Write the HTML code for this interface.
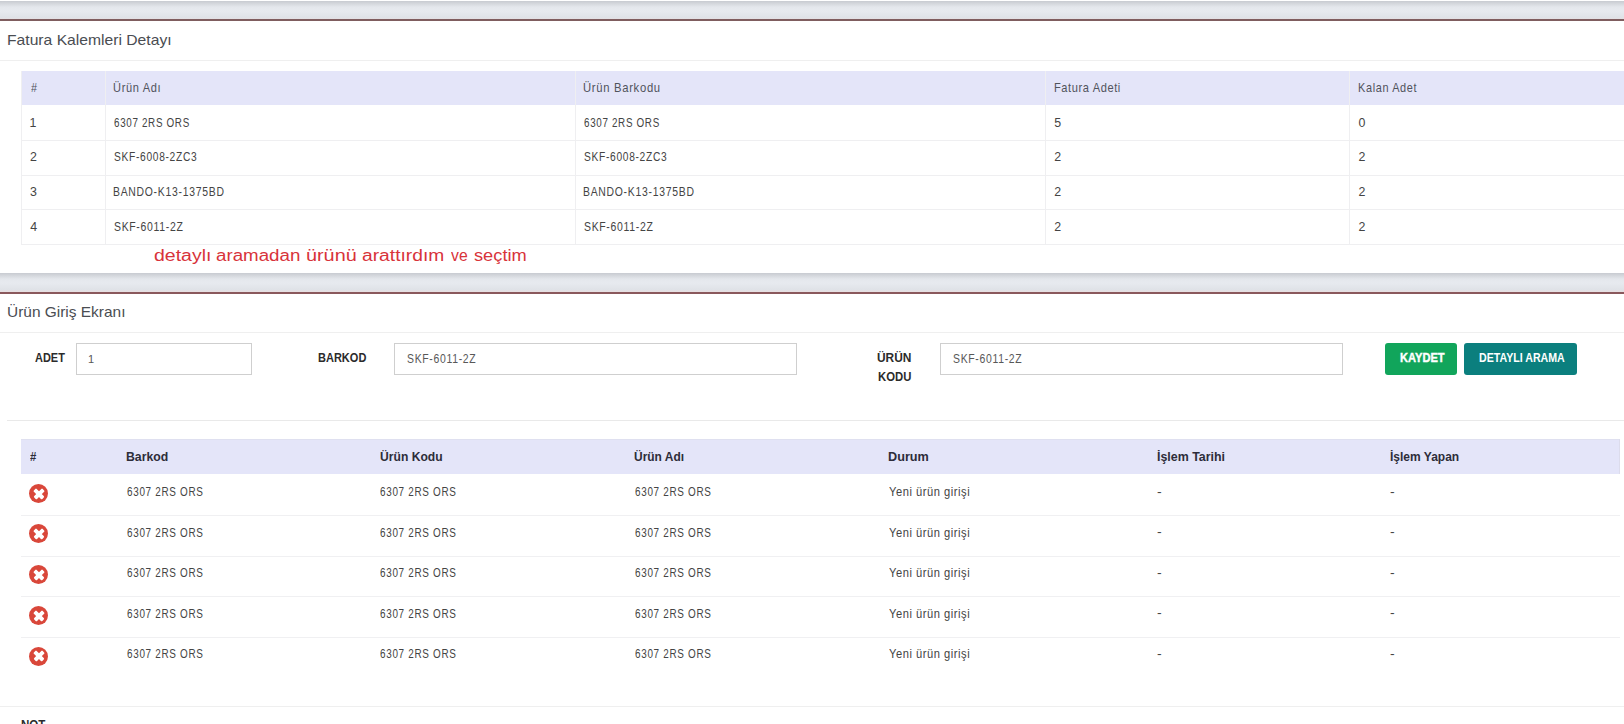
<!DOCTYPE html>
<html lang="tr"><head><meta charset="utf-8"><title>Fatura Kalemleri / Ürün Giriş</title>
<style>
html,body{margin:0;padding:0}
body{width:1624px;height:724px;overflow:hidden;position:relative;background:#e6e9ed;font-family:"Liberation Sans", sans-serif}
.t{position:absolute;white-space:nowrap;line-height:1;transform-origin:0 0}
.abs{position:absolute}
.card{position:absolute;left:0;width:1624px;background:#fff;border-top:2px solid #835c5e;box-sizing:border-box}
.card-header{position:absolute;left:0;top:0;width:1624px;box-sizing:border-box;border-bottom:1px solid #efefef}
.gap{position:absolute;left:0;width:1624px;height:19px;background:linear-gradient(#c8cbd1 0px,#e4e7ec 6px,#e7eaef 10px,#dfe2e7 17px,#e6dfe2 18px)}
.hl{position:absolute;height:1px}
.vl{position:absolute;width:1px}
.tbl{position:absolute}
.thead{position:absolute;left:0;top:0;background:#e4e5f9}
.inp{position:absolute;border:1px solid #cfcfcf;background:#fff;box-sizing:border-box;height:32px}
.btn{position:absolute;height:32px;border-radius:3px;box-sizing:border-box}
.xi{position:absolute;width:19px;height:19px;border-radius:50%;background:#d9473a}
.xi:before,.xi:after{content:"";position:absolute;left:3.5px;top:7.75px;width:12px;height:3.5px;background:#fff;border-radius:1px;transform:rotate(45deg)}
.xi:after{transform:rotate(-45deg)}
</style></head><body>
<div class="abs" style="left:0;top:0;width:1624px;height:1px;background:#fff"></div>
<div class="gap" style="top:1px"></div>

<div class="card" style="top:19px;height:254px;border-top-color:#7f5d5f">
<div class="card-header" style="height:40px">
<span class="t" style="left:6.75px;top:11.00px;font-size:15.217px;color:#4a4d52;transform:scaleX(1.0305)">Fatura Kalemleri Detayı</span>
</div>
<div class="tbl" style="left:21px;top:50px;width:1603px;height:175px">
<div class="thead" style="width:1603px;height:34px"></div>
<div class="hl" style="left:0;top:69px;width:1603px;background:#efeff1"></div>
<div class="hl" style="left:0;top:104px;width:1603px;background:#efeff1"></div>
<div class="hl" style="left:0;top:138px;width:1603px;background:#efeff1"></div>
<div class="hl" style="left:0;top:173px;width:1603px;background:#efeff1"></div>
<div class="vl" style="left:0px;top:0;height:174px;background:#efeff1"></div>
<div class="vl" style="left:84px;top:0;height:174px;background:#efeff1"></div>
<div class="vl" style="left:554px;top:0;height:174px;background:#efeff1"></div>
<div class="vl" style="left:1024px;top:0;height:174px;background:#efeff1"></div>
<div class="vl" style="left:1328px;top:0;height:174px;background:#efeff1"></div>
<span class="t" style="left:9.50px;top:11.20px;font-size:12.464px;color:#50535c;transform:scaleX(0.8674)">#</span>
<span class="t" style="left:92.37px;top:11.20px;font-size:12.464px;color:#50535c;letter-spacing:0.748px;transform:scaleX(0.8867)">Ürün Adı</span>
<span class="t" style="left:562.45px;top:11.20px;font-size:12.464px;color:#50535c;letter-spacing:0.759px;transform:scaleX(0.9055)">Ürün Barkodu</span>
<span class="t" style="left:1032.91px;top:11.20px;font-size:12.464px;color:#50535c;letter-spacing:0.667px;transform:scaleX(0.8897)">Fatura Adeti</span>
<span class="t" style="left:1337.13px;top:11.20px;font-size:12.464px;color:#50535c;letter-spacing:0.740px;transform:scaleX(0.8753)">Kalan Adet</span>
<span class="t" style="left:8.57px;top:45.90px;font-size:12.394px;color:#444444">1</span>
<span class="t" style="left:92.71px;top:45.90px;font-size:12.754px;color:#444444;letter-spacing:0.876px;transform:scaleX(0.7710)">6307 2RS ORS</span>
<span class="t" style="left:562.81px;top:45.90px;font-size:12.754px;color:#444444;letter-spacing:0.876px;transform:scaleX(0.7710)">6307 2RS ORS</span>
<span class="t" style="left:1033.30px;top:45.90px;font-size:12.394px;color:#444444">5</span>
<span class="t" style="left:1337.57px;top:45.90px;font-size:12.394px;color:#444444">0</span>
<span class="t" style="left:8.88px;top:80.30px;font-size:12.394px;color:#444444">2</span>
<span class="t" style="left:92.74px;top:80.30px;font-size:12.754px;color:#444444;letter-spacing:0.850px;transform:scaleX(0.8023)">SKF-6008-2ZC3</span>
<span class="t" style="left:562.84px;top:80.30px;font-size:12.754px;color:#444444;letter-spacing:0.850px;transform:scaleX(0.8023)">SKF-6008-2ZC3</span>
<span class="t" style="left:1033.18px;top:80.30px;font-size:12.394px;color:#444444">2</span>
<span class="t" style="left:1337.38px;top:80.30px;font-size:12.394px;color:#444444">2</span>
<span class="t" style="left:9.07px;top:115.00px;font-size:12.394px;color:#444444">3</span>
<span class="t" style="left:92.37px;top:115.00px;font-size:12.754px;color:#444444;letter-spacing:0.896px;transform:scaleX(0.8152)">BANDO-K13-1375BD</span>
<span class="t" style="left:562.47px;top:115.00px;font-size:12.754px;color:#444444;letter-spacing:0.896px;transform:scaleX(0.8152)">BANDO-K13-1375BD</span>
<span class="t" style="left:1033.18px;top:115.00px;font-size:12.394px;color:#444444">2</span>
<span class="t" style="left:1337.38px;top:115.00px;font-size:12.394px;color:#444444">2</span>
<span class="t" style="left:9.25px;top:149.80px;font-size:12.394px;color:#444444">4</span>
<span class="t" style="left:92.73px;top:149.80px;font-size:12.754px;color:#444444;letter-spacing:0.829px;transform:scaleX(0.8199)">SKF-6011-2Z</span>
<span class="t" style="left:562.83px;top:149.80px;font-size:12.754px;color:#444444;letter-spacing:0.829px;transform:scaleX(0.8199)">SKF-6011-2Z</span>
<span class="t" style="left:1033.18px;top:149.80px;font-size:12.394px;color:#444444">2</span>
<span class="t" style="left:1337.38px;top:149.80px;font-size:12.394px;color:#444444">2</span>
</div>
<div class="abs" style="left:0;top:0;width:1624px;height:252px">
<span class="t" style="left:154.12px;top:225.90px;font-size:17.222px;color:#d8333a;transform:scaleX(1.1310)">detaylı</span>
<span class="t" style="left:216.35px;top:225.90px;font-size:17.222px;color:#d8333a;transform:scaleX(1.0883)">aramadan</span>
<span class="t" style="left:305.71px;top:225.90px;font-size:17.222px;color:#d8333a;transform:scaleX(1.1510)">ürünü</span>
<span class="t" style="left:362.23px;top:225.90px;font-size:17.222px;color:#d8333a;transform:scaleX(1.1166)">arattırdım</span>
<span class="t" style="left:450.70px;top:225.90px;font-size:17.222px;color:#d8333a;transform:scaleX(0.9153)">ve</span>
<span class="t" style="left:474.24px;top:225.90px;font-size:17.222px;color:#d8333a;transform:scaleX(1.0592)">seçtim</span>
</div>
</div>

<div class="gap" style="top:273px"></div>

<div class="card" style="top:292px;height:432px;border-top-color:#8a585c">
<div class="card-header" style="height:39px">
<span class="t" style="left:6.84px;top:10.60px;font-size:14.928px;color:#4a4d52;transform:scaleX(1.0360)">Ürün Giriş Ekranı</span>
</div>
<div class="abs" style="left:0;top:0;width:1624px;height:100px">
<span class="t" style="left:35.08px;top:57.90px;font-size:12.174px;color:#2b2b2b;font-weight:bold;transform:scaleX(0.9018)">ADET</span>
<span class="t" style="left:317.58px;top:57.80px;font-size:12.174px;color:#2b2b2b;font-weight:bold;transform:scaleX(0.9064)">BARKOD</span>
<span class="t" style="left:877.28px;top:57.50px;font-size:12.174px;color:#2b2b2b;font-weight:bold;transform:scaleX(0.9816)">ÜRÜN</span>
<span class="t" style="left:878.06px;top:76.60px;font-size:12.174px;color:#2b2b2b;font-weight:bold;transform:scaleX(0.9314)">KODU</span>
<div class="inp" style="left:76px;top:49px;width:176px"><span class="t" style="left:10.98px;top:9.80px;font-size:10.986px;color:#585858">1</span></div>
<div class="inp" style="left:394px;top:49px;width:403px"><span class="t" style="left:11.73px;top:9.10px;font-size:12.464px;color:#585858;letter-spacing:0.810px;transform:scaleX(0.8390)">SKF-6011-2Z</span></div>
<div class="inp" style="left:940px;top:49px;width:403px"><span class="t" style="left:11.63px;top:9.10px;font-size:12.464px;color:#585858;letter-spacing:0.810px;transform:scaleX(0.8390)">SKF-6011-2Z</span></div>
<div class="btn" style="left:1385px;top:49px;width:72px;background:#11a55b"><span class="t" style="left:14.98px;top:8.90px;font-size:12.464px;color:#ffffff;font-weight:bold;-webkit-text-stroke:0.4px #fff;transform:scaleX(0.8900)">KAYDET</span></div>
<div class="btn" style="left:1464px;top:49px;width:113px;background:#0b7f7e"><span class="t" style="left:14.81px;top:8.90px;font-size:12.464px;color:#ffffff;font-weight:bold;transform:scaleX(0.8529)">DETAYLI ARAMA</span></div>
</div>
<div class="hl" style="left:7px;top:126px;width:1617px;background:#e9e9e9"></div>
<div class="tbl" style="left:21px;top:145px;width:1599px;height:240px">
<div class="thead" style="width:1599px;height:35px;box-shadow:inset -1px 0 0 #dcdcec, inset 0 1px 0 #dfe0f0"></div>
<div class="hl" style="left:0;top:76px;width:1599px;background:#f0f0f2"></div>
<div class="hl" style="left:0;top:117px;width:1599px;background:#f0f0f2"></div>
<div class="hl" style="left:0;top:157px;width:1599px;background:#f0f0f2"></div>
<div class="hl" style="left:0;top:198px;width:1599px;background:#f0f0f2"></div>
<div class="xi" style="left:8.4px;top:45.3px"></div>
<div class="xi" style="left:8.4px;top:85.1px"></div>
<div class="xi" style="left:8.4px;top:126.0px"></div>
<div class="xi" style="left:8.4px;top:166.8px"></div>
<div class="xi" style="left:8.4px;top:207.6px"></div>
<span class="t" style="left:8.93px;top:12.00px;font-size:12.319px;color:#2d2d3a;font-weight:bold;transform:scaleX(0.9190)">#</span>
<span class="t" style="left:104.70px;top:12.00px;font-size:12.319px;color:#2d2d3a;font-weight:bold;transform:scaleX(0.9968)">Barkod</span>
<span class="t" style="left:358.67px;top:12.00px;font-size:12.319px;color:#2d2d3a;font-weight:bold;transform:scaleX(0.9858)">Ürün Kodu</span>
<span class="t" style="left:613.18px;top:12.00px;font-size:12.319px;color:#2d2d3a;font-weight:bold;transform:scaleX(0.9716)">Ürün Adı</span>
<span class="t" style="left:866.98px;top:12.00px;font-size:12.319px;color:#2d2d3a;font-weight:bold;transform:scaleX(1.0298)">Durum</span>
<span class="t" style="left:1135.69px;top:12.00px;font-size:12.319px;color:#2d2d3a;font-weight:bold;transform:scaleX(1.0089)">İşlem Tarihi</span>
<span class="t" style="left:1368.52px;top:12.00px;font-size:12.319px;color:#2d2d3a;font-weight:bold;transform:scaleX(0.9761)">İşlem Yapan</span>
<span class="t" style="left:105.50px;top:47.00px;font-size:12.609px;color:#444444;letter-spacing:0.866px;transform:scaleX(0.7872)">6307 2RS ORS</span>
<span class="t" style="left:359.40px;top:47.00px;font-size:12.609px;color:#444444;letter-spacing:0.866px;transform:scaleX(0.7872)">6307 2RS ORS</span>
<span class="t" style="left:613.90px;top:47.00px;font-size:12.609px;color:#444444;letter-spacing:0.866px;transform:scaleX(0.7872)">6307 2RS ORS</span>
<span class="t" style="left:867.58px;top:47.00px;font-size:12.609px;color:#444444;letter-spacing:0.601px;transform:scaleX(0.8851)">Yeni ürün girişi</span>
<span class="t" style="left:1135.74px;top:45.50px;font-size:13.000px;color:#444444;transform:scaleX(1.0769)">-</span>
<span class="t" style="left:1368.74px;top:45.50px;font-size:13.000px;color:#444444;transform:scaleX(1.0769)">-</span>
<span class="t" style="left:105.50px;top:87.60px;font-size:12.609px;color:#444444;letter-spacing:0.866px;transform:scaleX(0.7872)">6307 2RS ORS</span>
<span class="t" style="left:359.40px;top:87.60px;font-size:12.609px;color:#444444;letter-spacing:0.866px;transform:scaleX(0.7872)">6307 2RS ORS</span>
<span class="t" style="left:613.90px;top:87.60px;font-size:12.609px;color:#444444;letter-spacing:0.866px;transform:scaleX(0.7872)">6307 2RS ORS</span>
<span class="t" style="left:867.58px;top:87.60px;font-size:12.609px;color:#444444;letter-spacing:0.601px;transform:scaleX(0.8851)">Yeni ürün girişi</span>
<span class="t" style="left:1135.74px;top:86.10px;font-size:13.000px;color:#444444;transform:scaleX(1.0769)">-</span>
<span class="t" style="left:1368.74px;top:86.10px;font-size:13.000px;color:#444444;transform:scaleX(1.0769)">-</span>
<span class="t" style="left:105.50px;top:128.20px;font-size:12.609px;color:#444444;letter-spacing:0.866px;transform:scaleX(0.7872)">6307 2RS ORS</span>
<span class="t" style="left:359.40px;top:128.20px;font-size:12.609px;color:#444444;letter-spacing:0.866px;transform:scaleX(0.7872)">6307 2RS ORS</span>
<span class="t" style="left:613.90px;top:128.20px;font-size:12.609px;color:#444444;letter-spacing:0.866px;transform:scaleX(0.7872)">6307 2RS ORS</span>
<span class="t" style="left:867.58px;top:128.20px;font-size:12.609px;color:#444444;letter-spacing:0.601px;transform:scaleX(0.8851)">Yeni ürün girişi</span>
<span class="t" style="left:1135.74px;top:126.70px;font-size:13.000px;color:#444444;transform:scaleX(1.0769)">-</span>
<span class="t" style="left:1368.74px;top:126.70px;font-size:13.000px;color:#444444;transform:scaleX(1.0769)">-</span>
<span class="t" style="left:105.50px;top:168.80px;font-size:12.609px;color:#444444;letter-spacing:0.866px;transform:scaleX(0.7872)">6307 2RS ORS</span>
<span class="t" style="left:359.40px;top:168.80px;font-size:12.609px;color:#444444;letter-spacing:0.866px;transform:scaleX(0.7872)">6307 2RS ORS</span>
<span class="t" style="left:613.90px;top:168.80px;font-size:12.609px;color:#444444;letter-spacing:0.866px;transform:scaleX(0.7872)">6307 2RS ORS</span>
<span class="t" style="left:867.58px;top:168.80px;font-size:12.609px;color:#444444;letter-spacing:0.601px;transform:scaleX(0.8851)">Yeni ürün girişi</span>
<span class="t" style="left:1135.74px;top:167.30px;font-size:13.000px;color:#444444;transform:scaleX(1.0769)">-</span>
<span class="t" style="left:1368.74px;top:167.30px;font-size:13.000px;color:#444444;transform:scaleX(1.0769)">-</span>
<span class="t" style="left:105.50px;top:209.40px;font-size:12.609px;color:#444444;letter-spacing:0.866px;transform:scaleX(0.7872)">6307 2RS ORS</span>
<span class="t" style="left:359.40px;top:209.40px;font-size:12.609px;color:#444444;letter-spacing:0.866px;transform:scaleX(0.7872)">6307 2RS ORS</span>
<span class="t" style="left:613.90px;top:209.40px;font-size:12.609px;color:#444444;letter-spacing:0.866px;transform:scaleX(0.7872)">6307 2RS ORS</span>
<span class="t" style="left:867.58px;top:209.40px;font-size:12.609px;color:#444444;letter-spacing:0.601px;transform:scaleX(0.8851)">Yeni ürün girişi</span>
<span class="t" style="left:1135.74px;top:207.90px;font-size:13.000px;color:#444444;transform:scaleX(1.0769)">-</span>
<span class="t" style="left:1368.74px;top:207.90px;font-size:13.000px;color:#444444;transform:scaleX(1.0769)">-</span>
</div>
<div class="hl" style="left:0;top:412px;width:1624px;background:#efefef"></div>
<span class="t" style="left:21.25px;top:424.50px;font-size:12.319px;color:#2b2b2b;font-weight:bold;transform:scaleX(0.9391)">NOT</span>
</div>
</body></html>
